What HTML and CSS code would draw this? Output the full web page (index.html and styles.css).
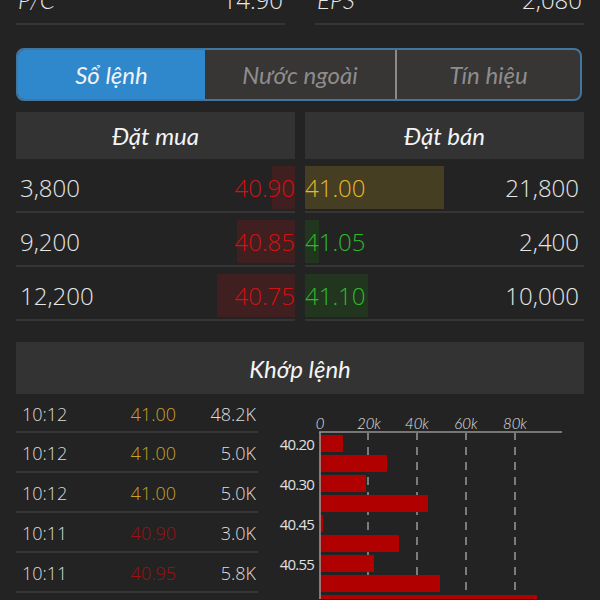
FILE: index.html
```html
<!DOCTYPE html>
<html lang="vi">
<head>
<meta charset="utf-8">
<title>Sổ lệnh</title>
<link rel="stylesheet" href="styles.css">
</head>
<body>
<div class="page">
  <div class="stats">
    <div class="stat"><span class="lbl">P/C</span><span class="val">14.90</span></div>
    <div class="stat"><span class="lbl">EPS</span><span class="val">2,080</span></div>
  </div>

  <div class="tabs">
    <div class="tab tab-active">Sổ lệnh</div>
    <div class="tab tab-mid">Nước ngoài</div>
    <div class="tab tab-last">Tín hiệu</div>
  </div>

  <div class="book">
    <div class="side buy">
      <div class="head">Đặt mua</div>
      <div class="row"><span class="qty">3,800</span><span class="px red" style="--w:23px">40.90</span></div>
      <div class="row"><span class="qty">9,200</span><span class="px red" style="--w:58px">40.85</span></div>
      <div class="row"><span class="qty">12,200</span><span class="px red" style="--w:78px">40.75</span></div>
    </div>
    <div class="side sell">
      <div class="head">Đặt bán</div>
      <div class="row"><span class="px yellow" style="--w:139px">41.00</span><span class="qty">21,800</span></div>
      <div class="row"><span class="px green" style="--w:14px">41.05</span><span class="qty">2,400</span></div>
      <div class="row"><span class="px green" style="--w:63px">41.10</span><span class="qty">10,000</span></div>
    </div>
  </div>

  <div class="match-head">Khớp lệnh</div>

  <div class="match">
    <div class="trades">
      <div class="trade"><span class="t">10:12</span><span class="p y">41.00</span><span class="v">48.2K</span></div>
      <div class="trade"><span class="t">10:12</span><span class="p y">41.00</span><span class="v">5.0K</span></div>
      <div class="trade"><span class="t">10:12</span><span class="p y">41.00</span><span class="v">5.0K</span></div>
      <div class="trade"><span class="t">10:11</span><span class="p r">40.90</span><span class="v">3.0K</span></div>
      <div class="trade"><span class="t">10:11</span><span class="p r">40.95</span><span class="v">5.8K</span></div>
    </div>
    <div class="chart">
      <svg width="326" height="205" viewBox="0 0 326 205">
        <g class="xlab">
          <text x="62" y="35">0</text>
          <text x="111" y="35">20k</text>
          <text x="159" y="35">40k</text>
          <text x="208" y="35">60k</text>
          <text x="257" y="35">80k</text>
        </g>
        <g class="grid">
          <line x1="110" y1="38" x2="110" y2="205"/>
          <line x1="159" y1="38" x2="159" y2="205"/>
          <line x1="208" y1="38" x2="208" y2="205"/>
          <line x1="257" y1="38" x2="257" y2="205"/>
        </g>
        <g class="bars">
          <rect x="62" y="41" width="23" height="17"/>
          <rect x="62" y="61" width="67" height="17"/>
          <rect x="62" y="81" width="46" height="17"/>
          <rect x="62" y="101" width="108" height="17"/>
          <rect x="62" y="121" width="3" height="17"/>
          <rect x="62" y="141" width="79" height="17"/>
          <rect x="62" y="161" width="54" height="17"/>
          <rect x="62" y="181" width="120" height="17"/>
          <rect x="62" y="201" width="217" height="17"/>
        </g>
        <line class="axis" x1="61" y1="38" x2="304" y2="38"/>
        <line class="yaxis" x1="62" y1="38" x2="62" y2="205"/>
        <g class="ylab">
          <text x="56" y="56">40.20</text>
          <text x="56" y="96">40.30</text>
          <text x="56" y="136">40.45</text>
          <text x="56" y="176">40.55</text>
        </g>
      </svg>
    </div>
  </div>
</div>
</body>
</html>
```
FILE: styles.css
```css
html, body {
  margin: 0;
  padding: 0;
  background: #232323;
}
body {
  width: 600px;
  height: 600px;
  overflow: hidden;
  font-family: "Open Sans", "Liberation Sans", sans-serif;
  font-weight: 300;
  color: #e8e8e8;
}
.page {
  width: 600px;
}

/* top stats */
.stats {
  display: flex;
  gap: 30px;
  margin: -12px 16px 0 16px;
}
.stat {
  flex: 1;
  height: 37px;
  box-sizing: border-box;
  border-bottom: 2px solid #353535;
  display: flex;
  justify-content: space-between;
  font-size: 24px;
  line-height: 24px;
  padding: 0 2px;
}
.stat .lbl {
  font-family: "Lato", sans-serif;
  font-style: italic;
}

/* tabs */
.tabs {
  display: flex;
  margin: 23px 18px 0 16px;
  height: 53px;
  box-sizing: border-box;
  border: 2px solid #44759a;
  border-radius: 8px;
  overflow: hidden;
  background: #383535;
}
.tab {
  display: flex;
  align-items: center;
  justify-content: center;
  font-family: "Lato", sans-serif;
  font-style: italic;
  font-weight: 400;
  font-size: 24px;
  color: #8d8d8d;
}
.tab-active {
  width: 187px;
  background: #2f88cb;
  color: #f2f2f2;
}
.tab-mid {
  width: 190px;
  border-right: 2px solid #8a8a8a;
}
.tab-last {
  flex: 1;
}

/* order book */
.book {
  display: grid;
  grid-template-columns: 279px 279px;
  gap: 10px;
  margin: 11px 16px 0 16px;
}
.head {
  height: 47px;
  background: #333333;
  display: flex;
  align-items: center;
  justify-content: center;
  font-family: "Lato", sans-serif;
  font-style: italic;
  font-weight: 400;
  font-size: 24px;
  color: #f4f4f4;
}
.row {
  display: flex;
  height: 54px;
  box-sizing: border-box;
  padding-top: 7px;
  border-bottom: 2px solid #353535;
  font-size: 24px;
  line-height: 43px;
}
.qty {
  color: #e6e6e6;
}
.buy .qty {
  padding-left: 4px;
}
.sell .qty {
  padding-right: 5px;
}
.px {
  flex: 1;
  height: 43px;
  background-repeat: no-repeat;
  background-size: var(--w) 100%;
}
.buy .px {
  text-align: right;
  background-position: right top;
}
.sell .px {
  text-align: left;
  background-position: left top;
}
.red {
  color: #d01414;
  background-image: linear-gradient(#3f1f1f, #3f1f1f);
}
.yellow {
  color: #e6b92a;
  background-image: linear-gradient(#463e22, #463e22);
}
.green {
  color: #2abb2a;
  background-image: linear-gradient(#22361f, #22361f);
}

/* matching */
.match-head {
  margin: 21px 16px 0 16px;
  height: 52px;
  background: #333333;
  display: flex;
  align-items: center;
  justify-content: center;
  font-family: "Lato", sans-serif;
  font-style: italic;
  font-weight: 400;
  font-size: 24px;
  color: #f4f4f4;
}
.match {
  display: grid;
  grid-template-columns: 242px 326px;
  margin: 0 16px;
}
.trade {
  display: grid;
  grid-template-columns: 100px 60px 80px;
  height: 40px;
  box-sizing: border-box;
  border-bottom: 2px solid #353535;
  font-size: 18px;
  line-height: 41px;
  overflow: hidden;
}
.trade:first-child {
  height: 39px;
}
.trade .t {
  padding-left: 6px;
  color: #dcdcdc;
}
.trade .p {
  text-align: right;
}
.trade .v {
  text-align: right;
  color: #dcdcdc;
}
.trade .y {
  color: #c9a227;
}
.trade .r {
  color: #9e1212;
}
.chart svg {
  display: block;
}
.xlab text {
  font-family: "Lato", sans-serif;
  font-style: italic;
  font-size: 15px;
  fill: #e0e0e0;
  text-anchor: middle;
}
.ylab text {
  font-family: "Open Sans", sans-serif;
  font-weight: 400;
  font-size: 15px;
  fill: #e0e0e0;
  text-anchor: end;
  letter-spacing: -0.8px;
}
.grid line {
  stroke: #9a9a9a;
  stroke-width: 1.5;
  stroke-dasharray: 8 7;
}
.bars rect {
  fill: #b00000;
}
.axis {
  stroke: #777777;
  stroke-width: 2;
}
.yaxis {
  stroke: #9a9a9a;
  stroke-width: 1.5;
}
```
